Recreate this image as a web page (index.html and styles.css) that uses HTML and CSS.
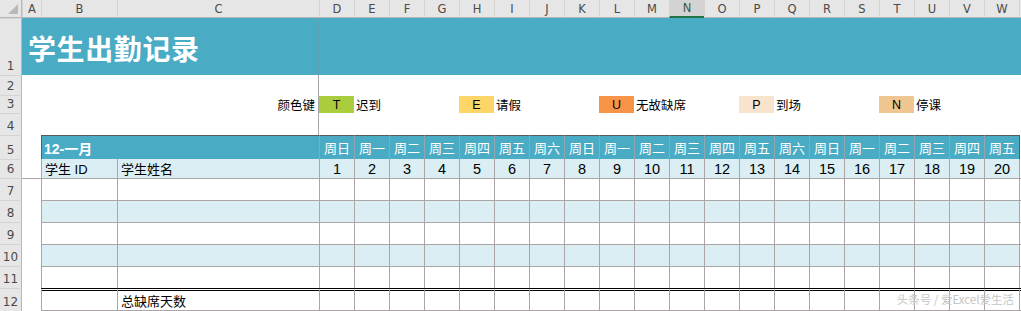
FILE: index.html
```html
<!DOCTYPE html>
<html lang="zh">
<head>
<meta charset="utf-8">
<title>学生出勤记录</title>
<link rel="stylesheet" href="styles.css">
</head>
<body>
<div class="sheet">
  <div class="corner"><svg width="10" height="10" viewBox="0 0 10 10"><polygon points="10,0 10,10 0,10" fill="#b9b9b9"/></svg></div>
  <div class="ch">A</div><div class="ch">B</div><div class="ch">C</div><div class="ch">D</div><div class="ch">E</div><div class="ch">F</div><div class="ch">G</div><div class="ch">H</div><div class="ch">I</div><div class="ch">J</div><div class="ch">K</div><div class="ch">L</div><div class="ch">M</div><div class="ch sel">N</div><div class="ch">O</div><div class="ch">P</div><div class="ch">Q</div><div class="ch">R</div><div class="ch">S</div><div class="ch">T</div><div class="ch">U</div><div class="ch">V</div><div class="ch">W</div><div class="ch"></div>

  <div class="rh">1</div>
  <div class="banner bl">学生出勤记录</div>
  <div class="banner br"></div>

  <div class="rh">2</div>
  <div class="blank bl"></div>
  <div class="blank br"></div>

  <div class="rh">3</div>
  <div class="lgap"></div>
  <div class="lkey">颜色键</div>
  <div class="sw t">T</div><div class="ltx">迟到</div>
  <div class="sw e">E</div><div class="ltx">请假</div>
  <div class="sw u">U</div><div class="ltx">无故缺席</div>
  <div class="sw p">P</div><div class="ltx">到场</div>
  <div class="sw n">N</div><div class="ltx">停课</div>
  <div></div>

  <div class="rh">4</div>
  <div class="blank bl"></div>
  <div class="blank br"></div>

  <div class="rh">5</div>
  <div class="a"></div>
  <div class="hd ttl">12-一月</div>
  <div class="hd">周日</div><div class="hd">周一</div><div class="hd">周二</div><div class="hd">周三</div><div class="hd">周四</div><div class="hd">周五</div><div class="hd">周六</div><div class="hd">周日</div><div class="hd">周一</div><div class="hd">周二</div><div class="hd">周三</div><div class="hd">周四</div><div class="hd">周五</div><div class="hd">周六</div><div class="hd">周日</div><div class="hd">周一</div><div class="hd">周二</div><div class="hd">周三</div><div class="hd">周四</div><div class="hd">周五</div>
  <div class="hend"></div>

  <div class="rh">6</div>
  <div class="a"></div>
  <div class="sub lt">学生 ID</div>
  <div class="sub lt">学生姓名</div>
  <div class="sub">1</div><div class="sub">2</div><div class="sub">3</div><div class="sub">4</div><div class="sub">5</div><div class="sub">6</div><div class="sub">7</div><div class="sub">8</div><div class="sub">9</div><div class="sub">10</div><div class="sub">11</div><div class="sub">12</div><div class="sub">13</div><div class="sub">14</div><div class="sub">15</div><div class="sub">16</div><div class="sub">17</div><div class="sub">18</div><div class="sub">19</div><div class="sub">20</div>
  <div class="send"></div>

  <div class="rh">7</div>
  <div class="a frz"></div>
  <div class="c"></div><div class="c"></div><div class="c"></div><div class="c"></div><div class="c"></div><div class="c"></div><div class="c"></div><div class="c"></div><div class="c"></div><div class="c"></div><div class="c"></div><div class="c"></div><div class="c"></div><div class="c"></div><div class="c"></div><div class="c"></div><div class="c"></div><div class="c"></div><div class="c"></div><div class="c"></div><div class="c"></div><div class="c"></div>
  <div class="c end"></div>

  <div class="rh">8</div>
  <div class="a"></div>
  <div class="c alt"></div><div class="c alt"></div><div class="c alt"></div><div class="c alt"></div><div class="c alt"></div><div class="c alt"></div><div class="c alt"></div><div class="c alt"></div><div class="c alt"></div><div class="c alt"></div><div class="c alt"></div><div class="c alt"></div><div class="c alt"></div><div class="c alt"></div><div class="c alt"></div><div class="c alt"></div><div class="c alt"></div><div class="c alt"></div><div class="c alt"></div><div class="c alt"></div><div class="c alt"></div><div class="c alt"></div>
  <div class="c end"></div>

  <div class="rh">9</div>
  <div class="a"></div>
  <div class="c"></div><div class="c"></div><div class="c"></div><div class="c"></div><div class="c"></div><div class="c"></div><div class="c"></div><div class="c"></div><div class="c"></div><div class="c"></div><div class="c"></div><div class="c"></div><div class="c"></div><div class="c"></div><div class="c"></div><div class="c"></div><div class="c"></div><div class="c"></div><div class="c"></div><div class="c"></div><div class="c"></div><div class="c"></div>
  <div class="c end"></div>

  <div class="rh">10</div>
  <div class="a"></div>
  <div class="c alt"></div><div class="c alt"></div><div class="c alt"></div><div class="c alt"></div><div class="c alt"></div><div class="c alt"></div><div class="c alt"></div><div class="c alt"></div><div class="c alt"></div><div class="c alt"></div><div class="c alt"></div><div class="c alt"></div><div class="c alt"></div><div class="c alt"></div><div class="c alt"></div><div class="c alt"></div><div class="c alt"></div><div class="c alt"></div><div class="c alt"></div><div class="c alt"></div><div class="c alt"></div><div class="c alt"></div>
  <div class="c end"></div>

  <div class="rh">11</div>
  <div class="a"></div>
  <div class="c"></div><div class="c"></div><div class="c"></div><div class="c"></div><div class="c"></div><div class="c"></div><div class="c"></div><div class="c"></div><div class="c"></div><div class="c"></div><div class="c"></div><div class="c"></div><div class="c"></div><div class="c"></div><div class="c"></div><div class="c"></div><div class="c"></div><div class="c"></div><div class="c"></div><div class="c"></div><div class="c"></div><div class="c"></div>
  <div class="c end"></div>

  <div class="rh">12</div>
  <div class="a"></div>
  <div class="c tot"></div>
  <div class="c tot lt">总缺席天数</div>
  <div class="c tot"></div><div class="c tot"></div><div class="c tot"></div><div class="c tot"></div><div class="c tot"></div><div class="c tot"></div><div class="c tot"></div><div class="c tot"></div><div class="c tot"></div><div class="c tot"></div><div class="c tot"></div><div class="c tot"></div><div class="c tot"></div><div class="c tot"></div><div class="c tot"></div><div class="c tot"></div><div class="c tot"></div><div class="c tot"></div><div class="c tot"></div><div class="c tot"></div>
  <div class="c tot end"></div>

  <div class="mark">头条号 / 爱Excel爱生活</div>
</div>
</body>
</html>
```

FILE: styles.css
```css
* { box-sizing: border-box; margin: 0; padding: 0; }
html, body { background: #fff; }
body {
  font-family: "Liberation Sans", "Noto Sans CJK SC", sans-serif;
  font-size: 13px;
  color: #000;
  overflow: hidden;
}
.sheet {
  position: relative;
  width: 1021px;
  display: grid;
  grid-template-columns: 22px 19px 76px 202px repeat(20, 35px) 1fr;
  grid-template-rows: 18px 57px 20px 18px 22px 24px 19px repeat(5, 22px) 23px;
}
.corner {
  background: #e6e6e6;
  border-right: 1px solid #b7b7b7;
  border-bottom: 1px solid #b7b7b7;
  display: flex;
  align-items: flex-end;
  justify-content: flex-end;
  padding: 0 3px 3px 0;
}
.ch {
  background: #e6e6e6;
  border-left: 1px solid #d4d4d4;
  border-bottom: 1px solid #b7b7b7;
  display: flex;
  align-items: center;
  justify-content: center;
  font-family: "DejaVu Sans", sans-serif;
  font-size: 11.5px;
  color: #4a4a4a;
}
.ch.sel {
  background: #d3d3d3;
  border-bottom: 2px solid #217346;
  color: #3c5a48;
}
.rh {
  background: #e6e6e6;
  border-right: 1px solid #b7b7b7;
  border-top: 1px solid #d4d4d4;
  display: flex;
  align-items: flex-end;
  justify-content: center;
  padding-bottom: 2px;
  font-family: "DejaVu Sans", sans-serif;
  font-size: 12px;
  color: #4a4a4a;
}
.banner {
  background: #4aabc5;
  color: #fff;
  display: flex;
  align-items: center;
  padding-top: 2px;
  font-family: "Noto Sans CJK SC", sans-serif;
  font-weight: 700;
  font-size: 28px;
  letter-spacing: 0.6px;
}
.bl { grid-column: span 3; border-right: 1px solid #a6a6a6; padding-left: 6px; }
.banner.bl { border-right-color: #5aa2b6; }
.br { grid-column: span 21; }
.lgap { grid-column: span 2; }
.lkey {
  border-right: 1px solid #a6a6a6;
  display: flex;
  align-items: center;
  justify-content: flex-end;
  padding-right: 3px;
  font-family: "Noto Sans CJK SC", sans-serif;
  font-size: 12.5px;
}
.sw {
  display: flex;
  align-items: center;
  justify-content: center;
  font-family: "Liberation Sans", sans-serif;
  font-size: 12.5px;
  margin-top: 1px;
}
.sw.t { background: #a9cd3c; }
.sw.e { background: #fdd568; }
.sw.u { background: #f79447; }
.sw.p { background: #f8e3cd; }
.sw.n { background: #efc591; }
.ltx {
  grid-column: span 3;
  display: flex;
  align-items: center;
  padding-left: 2px;
  font-family: "Noto Sans CJK SC", sans-serif;
  font-size: 12.5px;
}
.hd {
  background: #4aabc5;
  color: #fff;
  border-top: 1px solid #5b5b5b;
  border-left: 1px solid #8fa7af;
  display: flex;
  align-items: center;
  justify-content: center;
  font-family: "Noto Sans CJK SC", sans-serif;
  font-size: 13px;
}
.hd.ttl {
  grid-column: span 2;
  justify-content: flex-start;
  padding-left: 2px;
  border-left-color: #5b5b5b;
  font-family: "Liberation Sans", "Noto Sans CJK SC", sans-serif;
  font-weight: 700;
  font-size: 14px;
}
.hend { border-left: 1px solid #5b5b5b; }
.sub {
  background: #daeef3;
  border-left: 1px solid #aba5a8;
  display: flex;
  align-items: center;
  justify-content: center;
  font-size: 14.5px;
}
.lt { justify-content: flex-start; padding-left: 3px; font-size: 13px; }
.send { border-left: 1px solid #aba5a8; }
.a.frz { border-top: 1px solid #aba5a8; }
.c {
  border-left: 1px solid #aba5a8;
  border-top: 1px solid #aba5a8;
  display: flex;
  align-items: center;
}
.c.end { border-left: 1px solid #aba5a8; }
.alt { background: #daeef3; }
.tot {
  border-top: 3px double #000;
  border-bottom: 1px solid #aba5a8;
  font-family: "Noto Sans CJK SC", sans-serif;
}
.mark {
  position: absolute;
  right: 7px;
  bottom: 4px;
  font-family: "Noto Sans CJK SC", sans-serif;
  font-size: 11.5px;
  color: #c6c6c6;
}
```
